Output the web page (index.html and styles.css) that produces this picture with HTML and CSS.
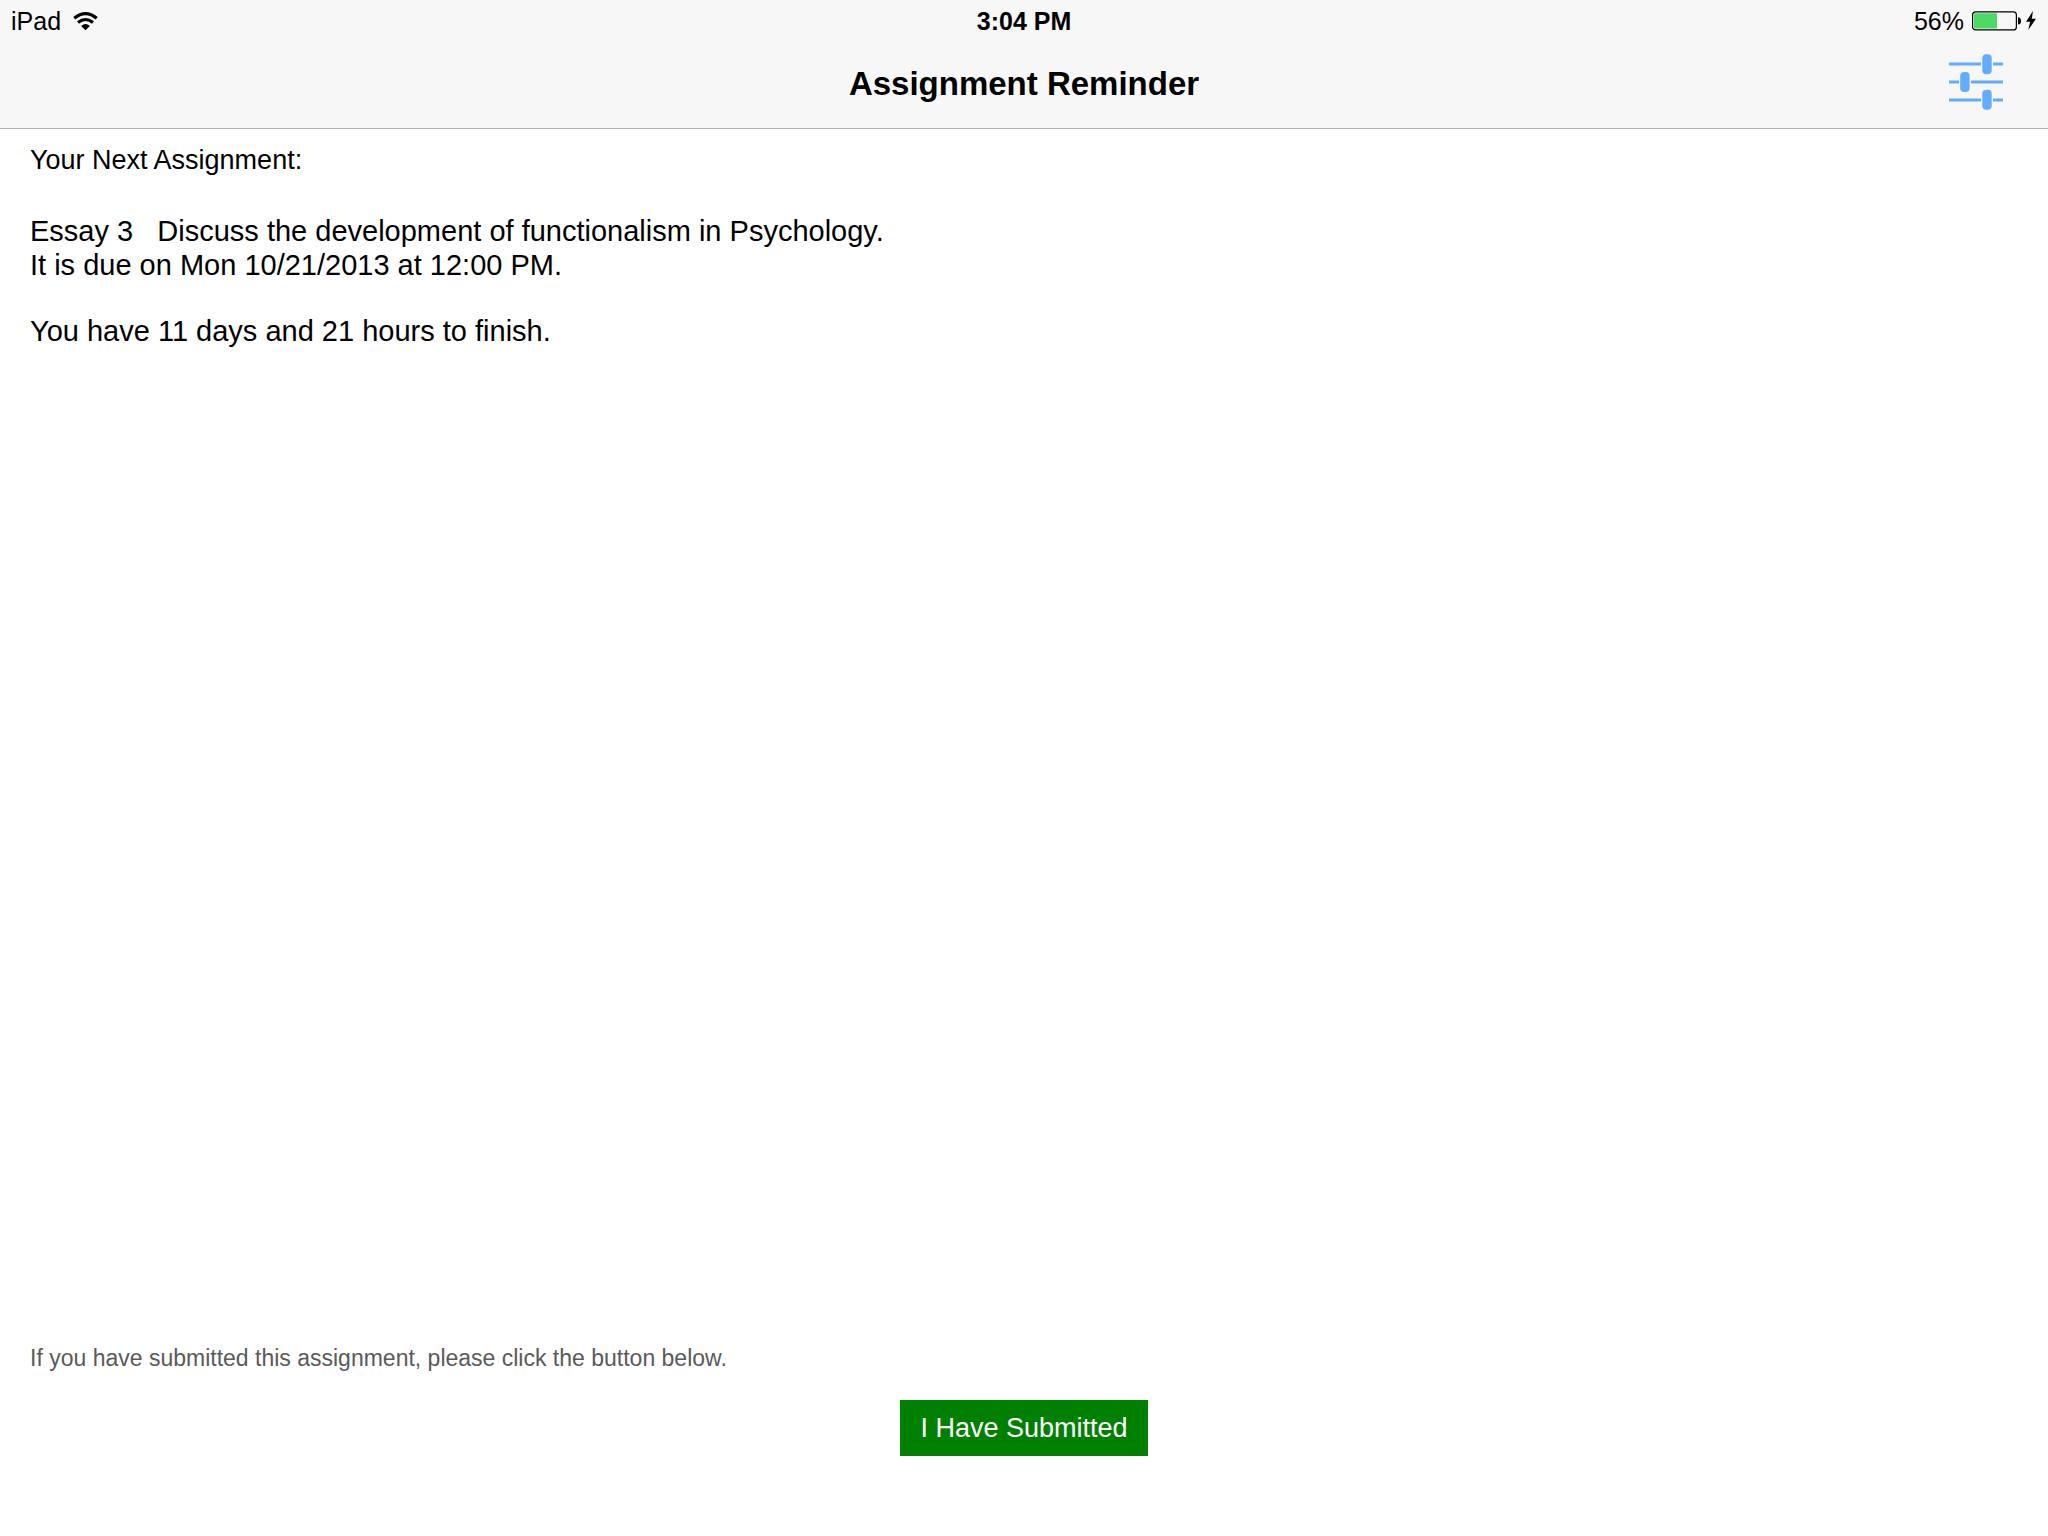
FILE: index.html
```html
<!DOCTYPE html>
<html lang="en">
<head>
<meta charset="utf-8">
<meta name="viewport" content="width=device-width, initial-scale=1">
<title>Assignment Reminder</title>
<link rel="stylesheet" href="styles.css">
</head>
<body>
<div class="app">
  <header class="header">
    <div class="status">
      <div class="status-left">
        <span>iPad</span>
        <svg class="wifi" viewBox="0 0 25 19" aria-hidden="true">
          <path d="M1.3 6.3Q12.5-3 23.7 6.3M5 10.5Q12.5 4.5 20 10.5" fill="none" stroke="#000" stroke-width="3.1"/>
          <path d="M8.2 14Q12.5 10.2 16.8 14L12.5 18.3Z"/>
        </svg>
      </div>
      <span class="time">3:04 PM</span>
      <div class="status-right">
        <span>56%</span>
        <svg class="battery" viewBox="0 0 65 20" aria-hidden="true">
          <rect x="0.6" y="0.9" width="43.8" height="18" rx="3" fill="none" stroke="#000" stroke-width="1.2"/>
          <rect x="2" y="2.3" width="23" height="15.2" rx="1" fill="#4cd964"/>
          <path d="M46 6.3Q49 6.5 49 10T46 13.5Z"/>
          <path d="M61 0L54 10.7H58.2L56.2 19L64 7.8H59.8Z"/>
        </svg>
      </div>
    </div>
    <div class="navbar">
      <h1 class="title">Assignment Reminder</h1>
      <button class="settings" type="button" aria-label="Settings">
        <svg class="sliders" viewBox="0 0 54 56" aria-hidden="true">
          <path d="M0 10H32M44 10H54M0 28H10M22 28H54M0 46H32M44 46H54" stroke="#62acfd" stroke-width="3.2"/>
          <g fill="#62acfd">
            <rect x="33.3" y="0.2" width="9.4" height="20" rx="4"/>
            <rect x="11.2" y="18" width="9.4" height="20" rx="4"/>
            <rect x="33.3" y="35.8" width="9.4" height="20" rx="4"/>
          </g>
        </svg>
      </button>
    </div>
  </header>
  <main class="content">
    <h2 class="label">Your Next Assignment:</h2>
    <p class="detail">Essay 3 &nbsp; Discuss the development of functionalism in Psychology.<br>It is due on Mon 10/21/2013 at 12:00 PM.</p>
    <p class="detail">You have 11 days and 21 hours to finish.</p>
    <div class="submit">
      <p class="note">If you have submitted this assignment, please click the button below.</p>
      <button class="submit-button" type="button">I Have Submitted</button>
    </div>
  </main>
</div>
</body>
</html>
```
FILE: styles.css
```css
* {
  box-sizing: border-box;
}

body {
  margin: 0;
  background: #fff;
  color: #000;
  font-family: "Liberation Sans", Arial, sans-serif;
}

h1, h2, p {
  margin: 0;
}

svg {
  display: block;
}

.app {
  display: flex;
  flex-direction: column;
  min-height: 100vh;
}

.header {
  background: #f7f7f7;
  border-bottom: 1px solid #b2b2b2;
}

.status {
  display: grid;
  grid-template-columns: 1fr auto 1fr;
  align-items: center;
  padding: 0 11px;
  font-size: 25px;
  line-height: 42px;
}

.status-left,
.status-right {
  display: flex;
  align-items: center;
  gap: 12px;
}

.status-right {
  justify-content: flex-end;
  gap: 8px;
}

.time {
  font-weight: 700;
}

.wifi {
  width: 25px;
  height: 19px;
}

.battery {
  width: 65px;
  height: 20px;
}

.navbar {
  display: grid;
  grid-template-columns: 1fr auto 1fr;
  align-items: start;
  padding: 0 45px 2px;
}

.title {
  grid-column: 2;
  font-size: 33px;
  font-weight: 700;
  line-height: 84px;
}

.settings {
  justify-self: end;
  padding: 12px 0 0;
  border: 0;
  background: none;
  cursor: pointer;
}

.sliders {
  width: 54px;
  height: 56px;
}

.content {
  display: flex;
  flex: 1;
  flex-direction: column;
  padding: 15px 30px 80px;
}

.label {
  margin-bottom: 38px;
  font-size: 27px;
  font-weight: 400;
  line-height: 32px;
}

.detail {
  margin-bottom: 32px;
  font-size: 29px;
  line-height: 34px;
}

.submit {
  display: flex;
  flex-direction: column;
  gap: 28px;
  margin-top: auto;
}

.note {
  color: #5a5a5a;
  font-size: 23px;
  line-height: 28px;
}

.submit-button {
  align-self: center;
  padding: 12px 20px;
  border: 0;
  background: #008000;
  color: #fff;
  font-family: inherit;
  font-size: 27px;
  line-height: 32px;
  cursor: pointer;
}
```
